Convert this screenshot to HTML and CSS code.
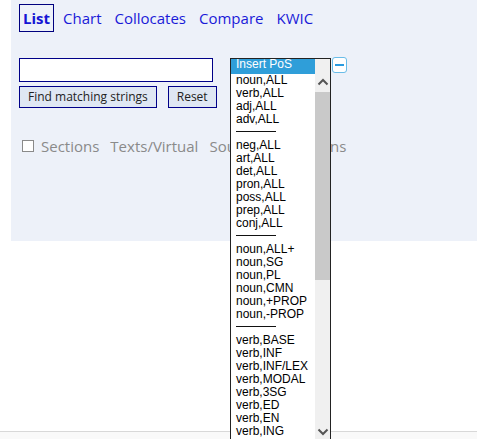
FILE: index.html
```html
<!DOCTYPE html>
<html>
<head>
<meta charset="utf-8">
<link rel="stylesheet" href="styles.css">
</head>
<body>
<div class="panel">
  <nav class="tabs">
    <a class="tab active">List</a>
    <a class="tab">Chart</a>
    <a class="tab">Collocates</a>
    <a class="tab">Compare</a>
    <a class="tab">KWIC</a>
  </nav>
  <div class="search">
    <div class="search-left">
      <input class="query" type="text">
      <div class="buttons">
        <button class="btn">Find matching strings</button>
        <button class="btn">Reset</button>
      </div>
    </div>
    <div class="pos-picker">
      <div class="pos-list">
        <div class="pos-items">
          <div class="item selected first">Insert PoS</div>
          <div class="item">noun,ALL</div>
          <div class="item">verb,ALL</div>
          <div class="item">adj,ALL</div>
          <div class="item">adv,ALL</div>
          <div class="item sep"><span></span></div>
          <div class="item">neg,ALL</div>
          <div class="item">art,ALL</div>
          <div class="item">det,ALL</div>
          <div class="item">pron,ALL</div>
          <div class="item">poss,ALL</div>
          <div class="item">prep,ALL</div>
          <div class="item">conj,ALL</div>
          <div class="item sep"><span></span></div>
          <div class="item">noun,ALL+</div>
          <div class="item">noun,SG</div>
          <div class="item">noun,PL</div>
          <div class="item">noun,CMN</div>
          <div class="item">noun,+PROP</div>
          <div class="item">noun,-PROP</div>
          <div class="item sep"><span></span></div>
          <div class="item">verb,BASE</div>
          <div class="item">verb,INF</div>
          <div class="item">verb,INF/LEX</div>
          <div class="item">verb,MODAL</div>
          <div class="item">verb,3SG</div>
          <div class="item">verb,ED</div>
          <div class="item">verb,EN</div>
          <div class="item">verb,ING</div>
        </div>
        <div class="scrollbar">
          <svg class="arrow up" width="12" height="8" viewBox="0 0 12 8"><path d="M1.5 6.5 L6 2 L10.5 6.5" fill="none" stroke="#555" stroke-width="2"/></svg>
          <div class="thumb"></div>
          <svg class="arrow down" width="12" height="8" viewBox="0 0 12 8"><path d="M1.5 1.5 L6 6 L10.5 1.5" fill="none" stroke="#555" stroke-width="2"/></svg>
        </div>
      </div>
      <button class="pos-close"><span></span></button>
    </div>
  </div>
  <div class="options">
    <label class="opt"><span class="check"></span>Sections</label>
    <span class="opt">Texts/Virtual</span>
    <span class="opt">Sources/Collections</span>
  </div>
</div>
<div class="bottom">
  <div class="rule"></div>
</div>
</body>
</html>
```
FILE: styles.css
```css
html, body {
  margin: 0;
  padding: 0;
  height: 439px;
  overflow: hidden;
  background: #fff;
  font-family: "Open Sans", "Liberation Sans", sans-serif;
}

.panel {
  margin-left: 11px;
  background: #edf1f9;
  height: 241px;
  padding: 4px 0 0 8px;
  box-sizing: border-box;
}

.tabs {
  display: flex;
  align-items: center;
  gap: 13px;
  height: 28px;
}

.tab {
  font-size: 15px;
  color: #1a1ad8;
  text-decoration: none;
  line-height: 20px;
}

.tab.active {
  font-weight: bold;
  border: 1px solid #00007f;
  padding: 3px 3px 3px 3px;
  margin-right: -4px;
  color: #1414d4;
}

.search {
  display: flex;
  margin-top: 26px;
  gap: 17px;
}

.search-left {
  display: flex;
  flex-direction: column;
  gap: 4px;
  width: 194px;
  flex: none;
}

.query {
  width: 194px;
  height: 24px;
  box-sizing: border-box;
  border: 1px solid #000088;
  background: #fff;
  margin: 0;
  padding: 0 4px;
}

.buttons {
  display: flex;
  gap: 11px;
}

.btn {
  font-family: "Open Sans", "Liberation Sans", sans-serif;
  font-size: 12px;
  color: #222;
  background: #dfe7f3;
  border: 1px solid #000088;
  height: 22px;
  padding: 0 8px;
  margin: 0;
  line-height: 18px;
  flex: none;
  white-space: nowrap;
}

.pos-picker {
  position: relative;
  padding-left: 102px;
  height: 24px;
}

.pos-list {
  position: absolute;
  left: 0;
  top: 0;
  width: 101px;
  height: 420px;
  box-sizing: border-box;
  border: 1px solid #222;
  background: #fff;
  display: flex;
  overflow: hidden;
  z-index: 2;
}

.pos-items {
  width: 84px;
  font-family: "Liberation Sans", Arial, sans-serif;
  font-size: 12px;
  color: #000;
}

.item {
  height: 13px;
  line-height: 13px;
  padding-left: 5px;
  white-space: nowrap;
}

.item.first {
  height: 15px;
  line-height: 11px;
}

.item.selected {
  background: #2f9ed9;
  color: #fff;
}

.item.sep {
  display: flex;
  align-items: center;
}

.item.sep span {
  display: block;
  width: 40px;
  height: 1px;
  background: #111;
  margin-top: -2px;
}

.scrollbar {
  width: 15px;
  background: #f0f0f0;
  display: flex;
  flex-direction: column;
  align-items: center;
  padding-top: 19px;
}

.arrow {
  display: block;
}

.thumb {
  width: 15px;
  height: 188px;
  background: #c9c9c9;
  margin-top: 6px;
}

.arrow.down {
  margin-top: 148px;
}

.pos-close {
  width: 15px;
  height: 16px;
  margin: -1px 0 0 0;
  padding: 0;
  border: 1px solid #69bce8;
  border-radius: 3px;
  background: #fff;
  display: flex;
  align-items: center;
  justify-content: center;
}

.pos-close span {
  display: block;
  width: 9px;
  height: 2px;
  background: #2a9be0;
}

.options {
  display: flex;
  align-items: center;
  gap: 11px;
  margin-top: 28px;
  padding-left: 3px;
  font-size: 15px;
  color: #8a8a8a;
  line-height: 20px;
}

.opt {
  display: flex;
  align-items: center;
}

.check {
  width: 12px;
  height: 12px;
  box-sizing: border-box;
  border: 1px solid #8a8a8a;
  background: #fff;
  margin-right: 7px;
}

.bottom {
  height: 198px;
  display: flex;
  flex-direction: column;
  justify-content: flex-end;
}

.rule {
  height: 7px;
  border-top: 1px solid #d8d8d8;
  background: #f9f9f9;
}
```
